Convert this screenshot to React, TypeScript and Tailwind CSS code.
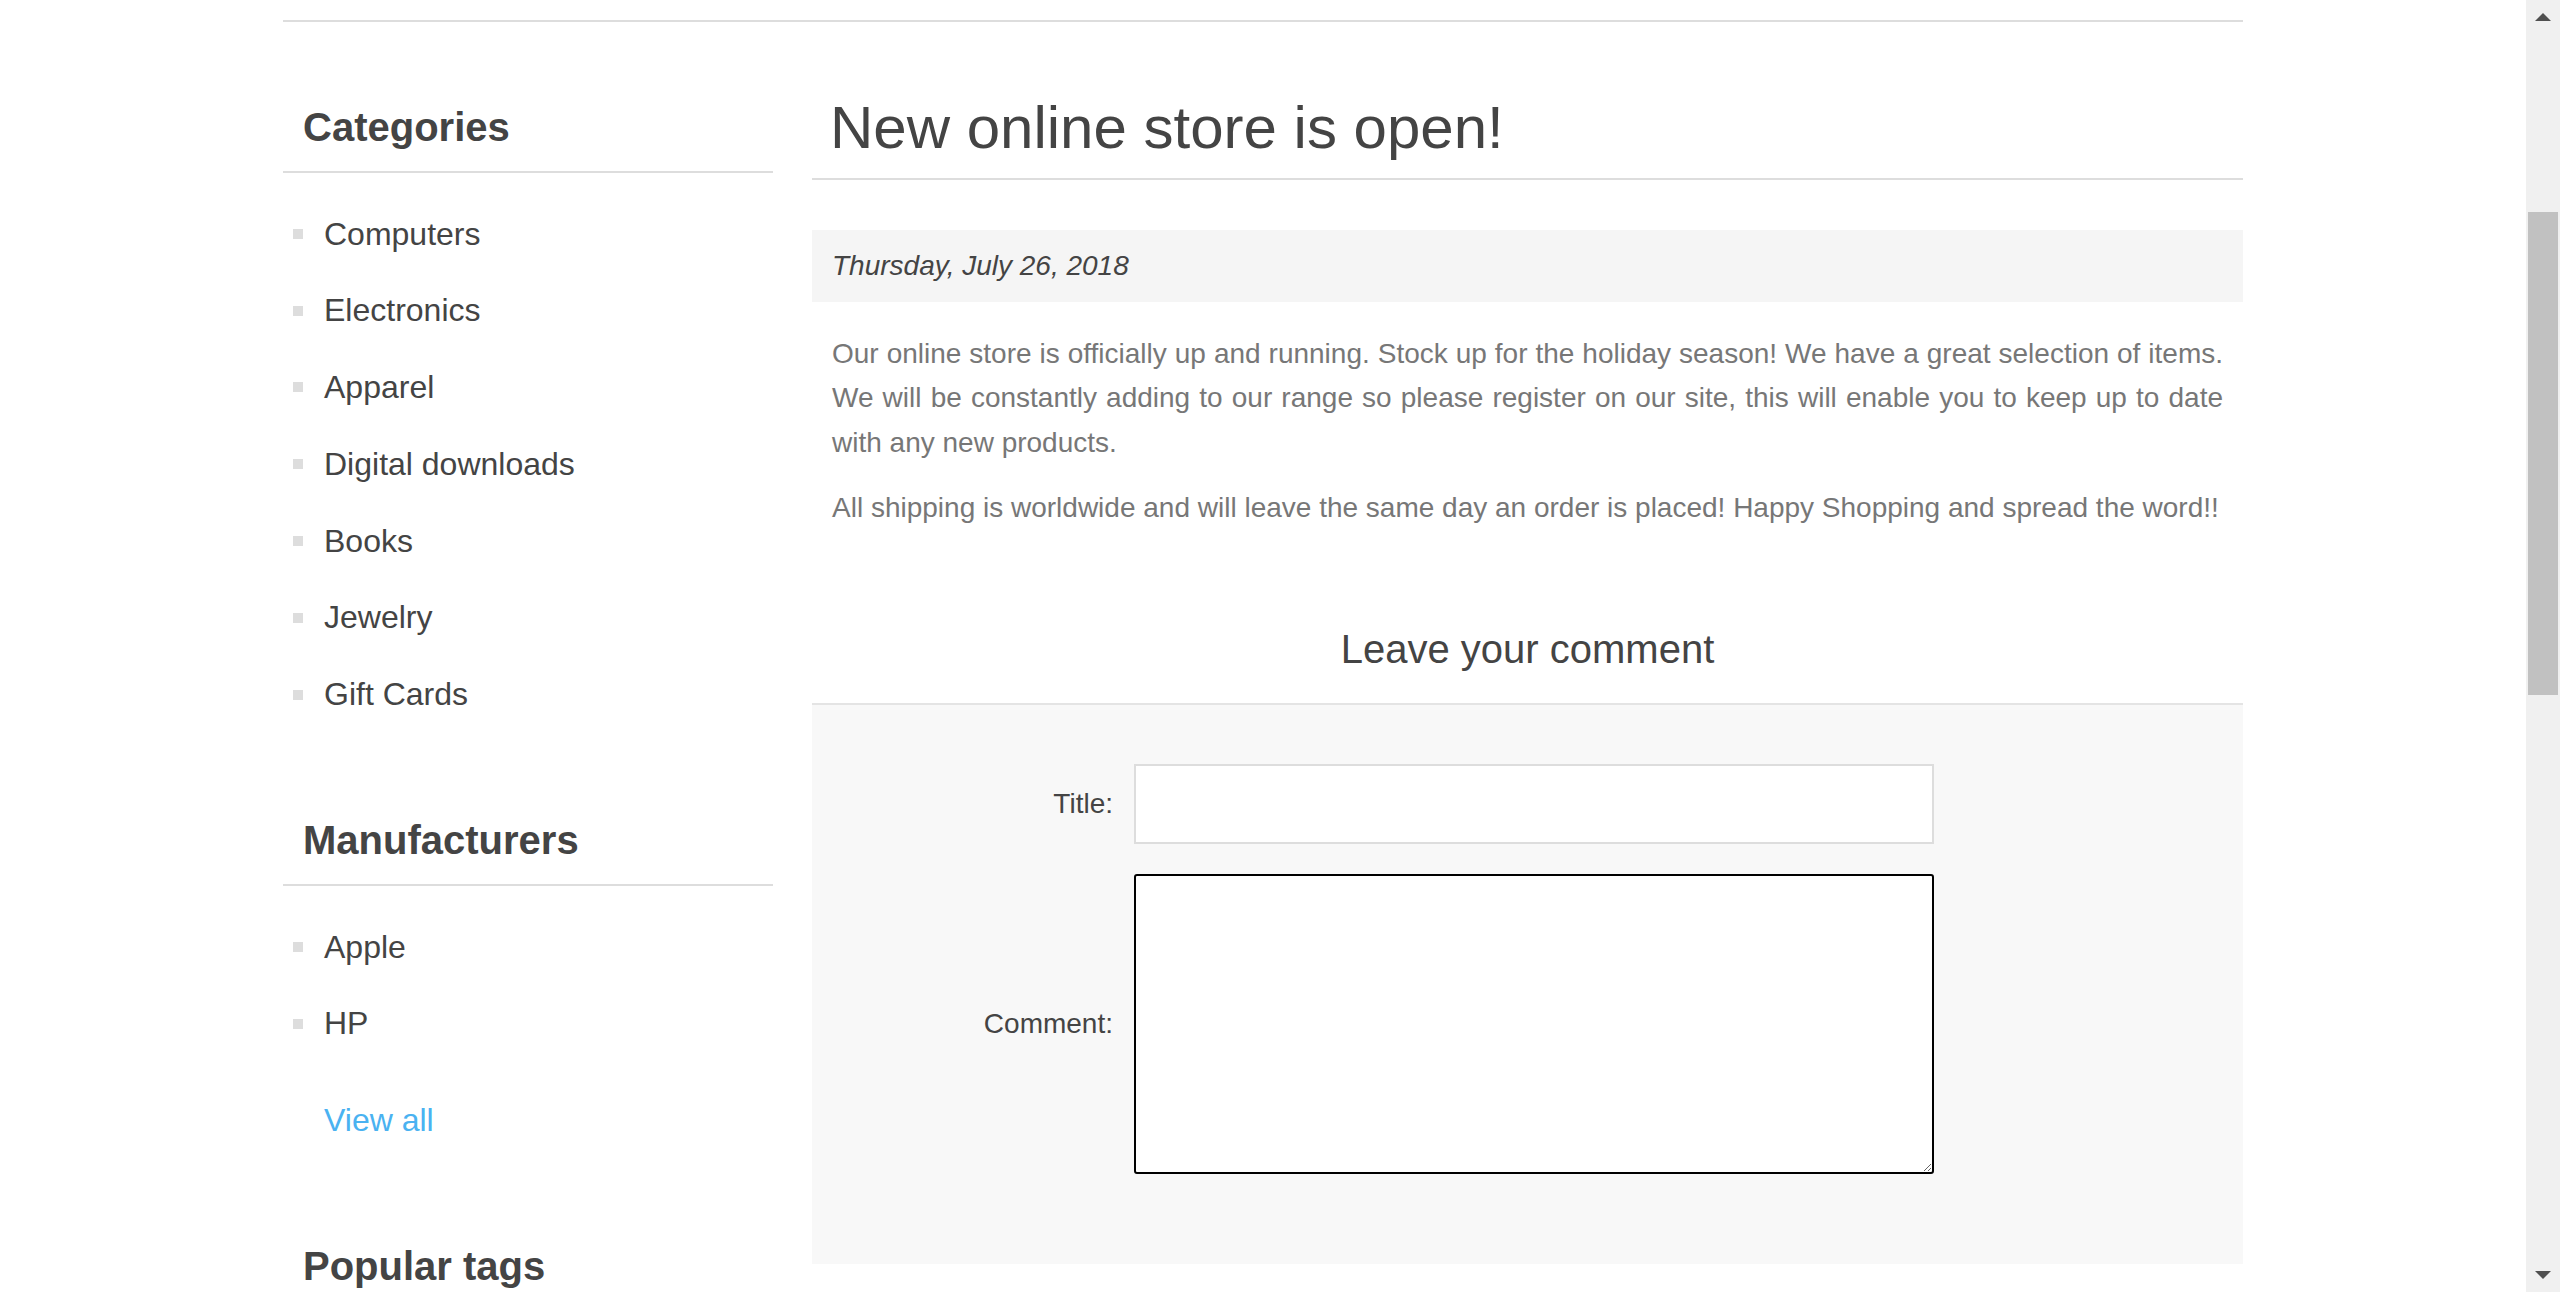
import React from "react";

const categories = ["Computers", "Electronics", "Apparel", "Digital downloads", "Books", "Jewelry", "Gift Cards"];
const manufacturers = ["Apple", "HP"];

function BlockTitle({ children }: { children: React.ReactNode }) {
  return (
    <h2 className="h-[70px] pl-[20px] text-[40px] leading-[48px] font-bold text-[#444] border-b-2 border-[#ddd]">
      {children}
    </h2>
  );
}

function NavList({ items }: { items: string[] }) {
  return (
    <ul className="mt-[22.5px]">
      {items.map((item) => (
        <li key={item} className="flex items-center h-[76.8px] leading-[76.8px] text-[32px] text-[#444]">
          <span className="ml-[10px] w-[10px] h-[10px] bg-[#ddd] shrink-0" />
          <span className="ml-[21px]">{item}</span>
        </li>
      ))}
    </ul>
  );
}

function Scrollbar() {
  return (
    <div className="w-[34px] shrink-0 h-full bg-[#f0f0f0] flex flex-col">
      <div className="h-[34px] flex items-center justify-center">
        <svg width="16" height="8" viewBox="0 0 16 8">
          <path d="M0 8 L8 0 L16 8 Z" fill="#505050" />
        </svg>
      </div>
      <div className="flex-1 px-[2px] pt-[178px]">
        <div className="h-[483px] bg-[#c1c1c1]" />
      </div>
      <div className="h-[34px] flex items-center justify-center">
        <svg width="16" height="8" viewBox="0 0 16 8">
          <path d="M0 0 L8 8 L16 0 Z" fill="#505050" />
        </svg>
      </div>
    </div>
  );
}

export default function App() {
  return (
    <div className="flex h-screen overflow-hidden bg-white font-['Liberation_Sans',Arial,sans-serif]">
      <div className="flex-1 min-w-0 overflow-hidden">
        <div className="mx-auto w-[1960px]">
          <div className="h-[22px] border-b-2 border-[#ddd]" />

          <div className="flex gap-[39px]">
            {/* side column */}
            <aside className="w-[490px] shrink-0 pt-[81px]">
              <BlockTitle>Categories</BlockTitle>
              <NavList items={categories} />

              <div className="mt-[83px]">
                <BlockTitle>Manufacturers</BlockTitle>
                <NavList items={manufacturers} />
                <div className="mt-[20px] h-[76.8px] leading-[76.8px] pl-[41px] text-[32px] text-[#4ab2f1]">View all</div>
              </div>

              <div className="mt-[83px]">
                <BlockTitle>Popular tags</BlockTitle>
                <div className="mt-[30px] pl-[20px] text-[28px] text-[#444] leading-[44px]">
                  apparel, awesome, book, camera, cell, compact, computer, cool
                </div>
              </div>
            </aside>

            {/* news item */}
            <main className="w-[1431px] shrink-0 pt-[69.5px]">
              <h1 className="h-[88px] pl-[18px] pr-[20px] text-[60px] leading-[72px] text-[#444] border-b-2 border-[#ddd]">
                New online store is open!
              </h1>

              <div className="mt-[50px] h-[72px] leading-[72px] px-[20px] bg-[#f5f5f5] text-[28px] italic text-[#444]">
                Thursday, July 26, 2018
              </div>

              <div className="mt-[30px] px-[20px] text-[28px] leading-[44.5px] text-[#777] text-justify">
                <p>
                  Our online store is officially up and running. Stock up for the holiday season! We have a great selection of
                  items. We will be constantly adding to our range so please register on our site, this will enable you to
                  keep up to date with any new products.
                </p>
                <p className="mt-[20.5px]">
                  All shipping is worldwide and will leave the same day an order is placed! Happy Shopping and spread the
                  word!!
                </p>
              </div>

              <h2 className="mt-[94.5px] h-[48px] leading-[48px] text-center text-[40px] text-[#444]">Leave your comment</h2>

              <div className="mt-[30px] border-t-2 border-[#e4e4e4] bg-[#f8f8f8] pt-[59px] pb-[90px]">
                <div className="flex items-center">
                  <label className="w-[301px] text-right text-[28px] text-[#444]">Title:</label>
                  <input
                    type="text"
                    className="ml-[21px] w-[800px] h-[80px] border-2 border-[#ddd] bg-white outline-none px-[16px] text-[28px]"
                  />
                </div>
                <div className="mt-[30px] flex items-center">
                  <label className="w-[301px] text-right text-[28px] text-[#444]">Comment:</label>
                  <textarea className="ml-[21px] w-[800px] h-[300px] border-2 border-black rounded-[3px] bg-white outline-none p-[16px] text-[28px]" />
                </div>
              </div>
            </main>
          </div>
        </div>
      </div>
      <Scrollbar />
    </div>
  );
}
